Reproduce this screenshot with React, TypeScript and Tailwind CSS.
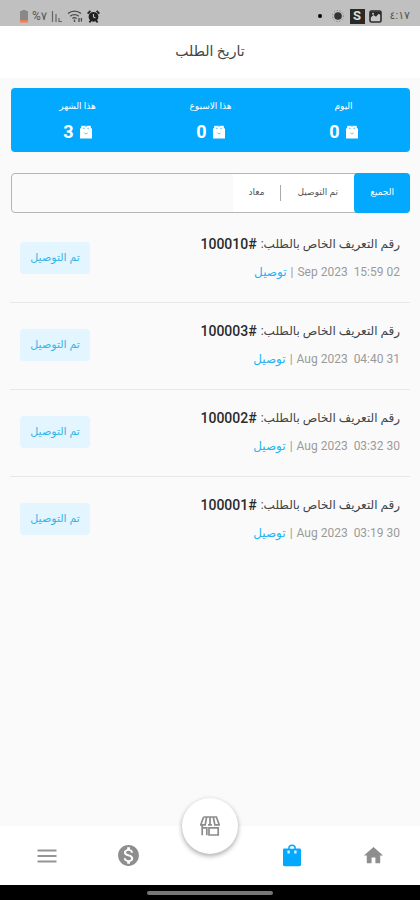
import React, { useState } from 'react';
import { MdHome, MdMonetizationOn } from 'react-icons/md';

interface Order {
  id: number;
  month: string;
  time: string;
  day: string;
}

const stats = [
  { label: 'اليوم', value: 0 },
  { label: 'هذا الاسبوع', value: 0 },
  { label: 'هذا الشهر', value: 3 },
];

const filters = ['الجميع', 'تم التوصيل', 'معاد'];

const orders: Order[] = [
  { id: 100010, month: 'Sep 2023', time: '15:59', day: '02' },
  { id: 100003, month: 'Aug 2023', time: '04:40', day: '31' },
  { id: 100002, month: 'Aug 2023', time: '03:32', day: '30' },
  { id: 100001, month: 'Aug 2023', time: '03:19', day: '30' },
];

function BoxIcon() {
  return (
    <svg width="12" height="14" viewBox="0 0 12 14" aria-hidden="true">
      <path d="M1.2 4V.8h9.6V4z" fill="#fff" />
      <rect y="3.2" width="12" height="10.3" rx="0.6" fill="#fff" />
      <path d="M2.8 3.3h2M7.2 3.3h2M4.4 8l1.6.9L7.6 8" fill="none" stroke="#4fc1fb" strokeWidth="0.9" />
      <path d="M5.4.8h1.2v1.2H5.4z" fill="#4fc1fb" />
    </svg>
  );
}

function BagIcon() {
  return (
    <svg width="20" height="24" viewBox="0 0 20 24" aria-hidden="true">
      <path d="M6.8 7V4.4a3.2 3.2 0 0 1 6.4 0V7" fill="none" stroke="#03a9ff" strokeWidth="1.5" />
      <rect x="1" y="4.6" width="18" height="17.6" rx="1.4" fill="#03a9ff" />
      <path d="M5.4 6.6h2.4v2.8H5.4zM12.2 6.6h2.4v2.8h-2.4z" fill="#d5f1ff" />
      <path d="M8.3 4.6a1.7 1.7 0 0 1 3.4 0z" fill="#fff" />
    </svg>
  );
}

function StoreIcon() {
  return (
    <svg width="20" height="20" viewBox="0 0 20 20" fill="none" stroke="#8c8c8c" strokeWidth="1.7" aria-hidden="true">
      <path d="M3.6 1h12.8l2.8 7.8h-4.4L13.4 1.4M3.6 1 .8 8.8h4.4L6.6 1.4M10 1v7.8M8 8.8h4" />
      <path d="M2.2 9v10.2M6.8 19.2v-7.4H2.2M9 11.8h9.2v7.2H9z" />
    </svg>
  );
}

function MenuIcon() {
  return (
    <svg width="20" height="14" viewBox="0 0 20 14" aria-hidden="true">
      <path d="M.5 1.5h19M.5 7h19M.5 12.5h19" stroke="#959595" strokeWidth="1.8" />
    </svg>
  );
}

function PictureIcon() {
  return (
    <svg width="13" height="13" viewBox="0 0 13 13" aria-hidden="true">
      <rect x="1" y="1" width="11" height="11" rx="1.6" fill="#c8c8c8" stroke="#2b2b2b" strokeWidth="1.6" />
      <path d="M1 1.5h11v3.2L9.4 4 7 6.8 4.6 5 1 8z" fill="#2b2b2b" />
      <circle cx="4" cy="3.8" r="1" fill="#c8c8c8" />
    </svg>
  );
}

function AlarmIcon() {
  return (
    <svg width="13" height="13" viewBox="0 0 13 13" aria-hidden="true">
      <path d="M.6 3.6 3.4.8M12.4 3.6 9.6.8M2.4 12.4l1.6-2M10.6 12.4l-1.6-2" stroke="#222" strokeWidth="1.8" />
      <circle cx="6.5" cy="6.8" r="4.9" fill="#222" />
      <path d="M6.5 4v3l2 1" fill="none" stroke="#c0c0c0" strokeWidth="1.1" />
    </svg>
  );
}

function WifiIcon() {
  return (
    <svg width="16" height="14" viewBox="0 0 16 14" fill="none" stroke="#4a4a4a" strokeWidth="1.3" aria-hidden="true">
      <path d="M1 4.6a9.6 9.6 0 0 1 13 0M3.2 7.2a6.4 6.4 0 0 1 8.6 0M5.4 9.6a3.2 3.2 0 0 1 4.2 0" />
      <path d="M7.5 10.6v2.4M12 9v4M14.4 9v3.4" />
    </svg>
  );
}

function StatusBar() {
  return (
    <div className="flex h-[26px] items-center justify-between bg-[#c0c0c0] pt-1.5 pr-2.5 pl-5 text-[#555]">
      <div className="flex items-center gap-1">
        <span className="text-[11px] leading-4">٤:١٧</span>
        <span className="mr-1">
          <PictureIcon />
        </span>
        <span className="flex size-[15px] items-center justify-center bg-[#292929] text-[13px] font-bold text-[#ddd]">S</span>
        <svg width="16" height="14" viewBox="0 0 16 14" aria-hidden="true">
          <circle cx="8" cy="7" r="5.5" fill="none" stroke="#777" strokeWidth="1" strokeDasharray="1 2" />
          <circle cx="8" cy="7" r="3.8" fill="#333" />
        </svg>
        <span className="mr-1 size-1 rounded-full bg-black" />
      </div>
      <div className="flex items-center gap-1">
        <AlarmIcon />
        <WifiIcon />
        <svg width="12" height="13" viewBox="0 0 12 13" aria-hidden="true">
          <path d="M1.5 1v11M5 4v8M8 8v4M8 11.5h3" fill="none" stroke="#666" strokeWidth="1.2" />
        </svg>
        <span dir="ltr" className="text-xs leading-4">%٧</span>
        <svg width="8" height="13" viewBox="0 0 8 13" aria-hidden="true">
          <path d="M2 0h4v1h2v9H0V1h2z" fill="#888" />
          <path d="M0 10h8v2.5H0z" fill="#f08050" />
        </svg>
      </div>
    </div>
  );
}

function OrderRow({ order }: { order: Order }) {
  return (
    <li className="mx-2.5 flex h-[87px] items-start justify-between border-b border-[#e8e8e8] px-2.5 pt-4 last:border-0">
      <div>
        <p className="flex items-center gap-1 text-xs leading-6 text-[#444]">
          <span>رقم التعريف الخاص بالطلب:</span>
          <span className="flex text-sm leading-6 font-medium text-[#2a2a2a]">
            <span>#</span>
            <span>{order.id}</span>
          </span>
        </p>
        <p className="mt-1 flex items-center gap-1 text-xs leading-6 text-[#9a9a9a]">
          <bdi dir="ltr" className="whitespace-pre">{order.month}  {order.time} {order.day}</bdi>
          <span>|</span>
          <span className="text-[#22b4f5]">توصيل</span>
        </p>
      </div>
      <span className="mt-2.5 flex h-8 w-[70px] items-center justify-center rounded-sm bg-[#e3f5fe] text-[11px] text-[#36b5e8]">
        تم التوصيل
      </span>
    </li>
  );
}

export default function App() {
  const [filter, setFilter] = useState(filters[0]);

  return (
    <div dir="rtl" className="flex min-h-screen flex-col bg-[#fafafa] font-['Roboto','DejaVu_Sans',sans-serif]">
      <StatusBar />
      <header className="flex h-[52px] items-center justify-center bg-white pb-0.5">
        <h1 className="text-sm text-[#444]">تاريخ الطلب</h1>
      </header>

      <main className="flex-1">
        <section className="mt-2.5 mr-2.5 ml-[11px] flex h-16 items-center rounded bg-[#03a9ff] text-white">
          {stats.map((stat) => (
            <div key={stat.label} className="flex flex-1 flex-col items-center gap-1">
              <span className="text-[9px] leading-5">{stat.label}</span>
              <span className="flex items-center gap-1.5 text-lg leading-6 font-bold">
                <BoxIcon />
                {stat.value}
              </span>
            </div>
          ))}
        </section>

        <div className="mt-[21px] mr-2.5 ml-[11px] flex h-10 rounded border border-[#b5b5b5]">
          {filters.map((name, i) => (
            <button
              key={name}
              type="button"
              onClick={() => setFilter(name)}
              className={`flex items-center text-[9px] ${name === filter ? '-my-px w-14 justify-center rounded bg-[#03a9ff] text-white first:-mr-px' : 'bg-white text-[#555]'}`}
            >
              {i === 2 && <span className="h-4 w-px bg-[#aaa]" />}
              {name === filter ? name : <span className="px-4">{name}</span>}
            </button>
          ))}
        </div>

        <ul className="mt-[3px]">
          {orders.map((order) => (
            <OrderRow key={order.id} order={order} />
          ))}
        </ul>
      </main>

      <nav className="relative flex h-[59px] items-center bg-white px-1.5 text-[#8e8e8e]">
        <button type="button" aria-label="الرئيسية" className="flex flex-1 justify-center"><MdHome size={23} /></button>
        <button type="button" aria-label="الطلبات" className="flex flex-1 justify-center"><BagIcon /></button>
        <div className="flex-1" />
        <button type="button" aria-label="المحفظة" className="flex flex-1 justify-center"><MdMonetizationOn size={25} /></button>
        <button type="button" aria-label="القائمة" className="flex flex-1 justify-center"><MenuIcon /></button>
        <button
          type="button"
          aria-label="المتجر"
          className="absolute -top-7 left-1/2 flex size-14 -translate-x-1/2 items-center justify-center rounded-full bg-white shadow-[0_2px_5px_rgba(0,0,0,0.35)]"
        >
          <StoreIcon />
        </button>
      </nav>
      <div className="flex h-[15px] items-center justify-center bg-black">
        <div className="h-1 w-[126px] rounded-full bg-[#777]" />
      </div>
    </div>
  );
}
